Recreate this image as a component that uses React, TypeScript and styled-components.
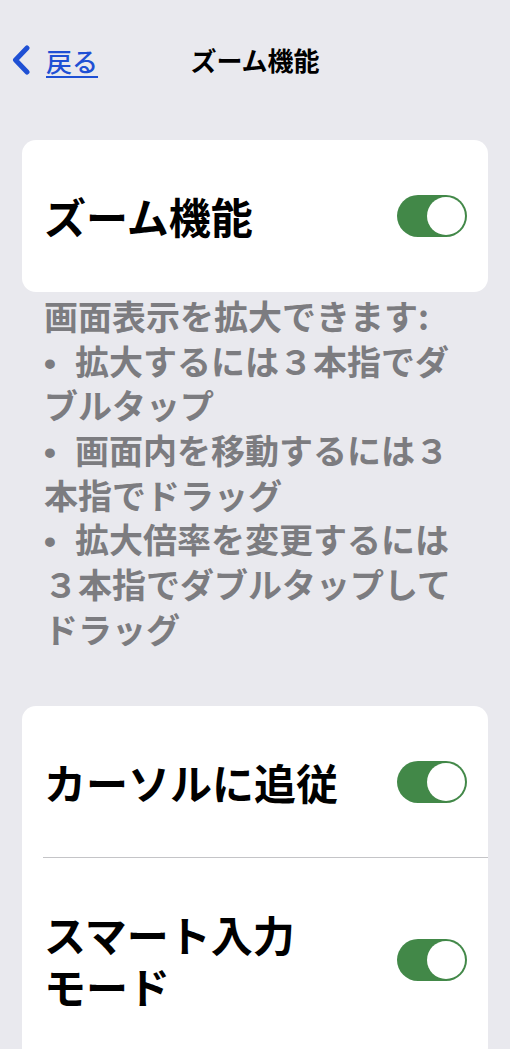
import React from "react";
import styled, { createGlobalStyle } from "styled-components";

const GlobalStyle = createGlobalStyle`
  html, body {
    margin: 0;
    padding: 0;
    background: #e9e9ee;
  }
  body {
    font-family: "Noto Sans CJK JP", "Noto Sans", sans-serif;
    -webkit-font-smoothing: antialiased;
  }
`;

const Page = styled.div`
  width: 510px;
  min-height: 1049px;
  background: #e9e9ee;
  overflow: hidden;
`;

const NavBar = styled.header`
  display: grid;
  grid-template-columns: 1fr auto 1fr;
  align-items: center;
  height: 44px;
  padding-top: 38px;
`;

const BackButton = styled.a`
  display: flex;
  align-items: center;
  gap: 15px;
  padding-left: 11px;
  color: #1f50d4;
  font-size: 26px;
  font-weight: 500;
  text-decoration: underline;
  text-underline-offset: 4px;
  text-decoration-thickness: 2px;
  cursor: pointer;
`;

const NavTitle = styled.h1`
  margin: 0;
  font-size: 26px;
  font-weight: 700;
  color: #000;
  line-height: 44px;
`;

const Card = styled.section<{ $top: number }>`
  margin: ${(p) => p.$top}px 22px 0;
  background: #ffffff;
  border-radius: 14px;
  overflow: hidden;
`;

const Row = styled.div<{ $divider?: boolean }>`
  position: relative;
  display: flex;
  align-items: center;
  justify-content: space-between;
  gap: 20px;
  padding: 50px 21px 50px 22px;
  ${(p) =>
    p.$divider
      ? `&::after {
    content: "";
    position: absolute;
    left: 21px;
    right: 0;
    bottom: 0;
    height: 1px;
    background: #c4c4c7;
  }`
      : ""}
`;

const Label = styled.div`
  font-size: 42px;
  font-weight: 700;
  line-height: 52px;
  color: #000;
`;

const Track = styled.div<{ $on: boolean }>`
  flex: none;
  position: relative;
  width: 70px;
  height: 42px;
  border-radius: 21px;
  background: ${(p) => (p.$on ? "#428848" : "#e3e3e8")};
`;

const Knob = styled.div<{ $on: boolean }>`
  position: absolute;
  top: 2px;
  left: ${(p) => (p.$on ? "30px" : "2px")};
  width: 38px;
  height: 38px;
  border-radius: 50%;
  background: #ffffff;
`;

const Footer = styled.div`
  margin: 2px 0 0;
  padding: 0 22px 0 44px;
  font-size: 34px;
  font-weight: 700;
  line-height: 44.7px;
  color: #7c7c80;
  white-space: nowrap;
`;

const Line = styled.div`
  height: 44.7px;
`;

const Bullet = styled.span`
  display: inline-block;
  width: 31px;
  line-height: 1;
  font-family: "Liberation Sans", sans-serif;
`;

function Chevron() {
  return (
    <svg width="20" height="30" viewBox="0 0 20 30" aria-hidden="true">
      <path
        d="M16 3 L4.5 15 L16 27"
        fill="none"
        stroke="#1f50d4"
        strokeWidth="5"
        strokeLinecap="round"
        strokeLinejoin="round"
      />
    </svg>
  );
}

function Switch({ on }: { on: boolean }) {
  return (
    <Track $on={on} role="switch" aria-checked={on}>
      <Knob $on={on} />
    </Track>
  );
}

export default function App() {
  return (
    <Page>
      <GlobalStyle />
      <NavBar>
        <BackButton>
          <Chevron />
          <span>戻る</span>
        </BackButton>
        <NavTitle>ズーム機能</NavTitle>
        <div />
      </NavBar>

      <Card $top={58}>
        <Row>
          <Label>ズーム機能</Label>
          <Switch on />
        </Row>
      </Card>

      <Footer>
        <Line>画面表示を拡大できます:</Line>
        <Line>
          <Bullet>•</Bullet>拡大するには３本指でダ
        </Line>
        <Line>ブルタップ</Line>
        <Line>
          <Bullet>•</Bullet>画面内を移動するには３
        </Line>
        <Line>本指でドラッグ</Line>
        <Line>
          <Bullet>•</Bullet>拡大倍率を変更するには
        </Line>
        <Line>３本指でダブルタップして</Line>
        <Line>ドラッグ</Line>
      </Footer>

      <Card $top={54}>
        <Row $divider>
          <Label>カーソルに追従</Label>
          <Switch on />
        </Row>
        <Row>
          <Label>
            スマート入力
            <br />
            モード
          </Label>
          <Switch on />
        </Row>
      </Card>
    </Page>
  );
}
